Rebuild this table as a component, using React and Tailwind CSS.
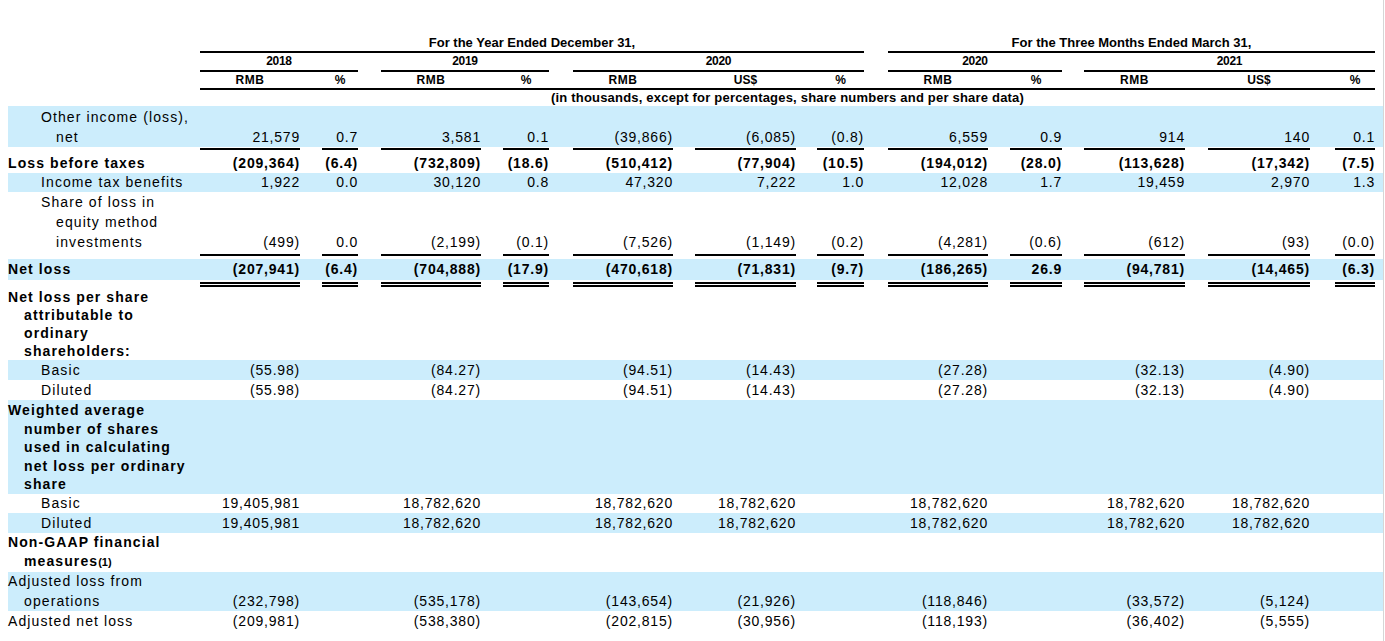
const cols = [
  ["w-[100px]", "w-[100px]"],
  ["w-[58px]", "w-[36px]"],
  ["w-[123px]", "w-[100px]"],
  ["w-[68px]", "w-[46px]"],
  ["w-[124px]", "w-[100px]"],
  ["w-[123px]", "w-[101px]"],
  ["w-[68px]", "w-[47px]"],
  ["w-[124px]", "w-[100px]"],
  ["w-[74px]", "w-[52px]"],
  ["w-[123px]", "w-[101px]"],
  ["w-[125px]", "w-[102px]"],
  ["w-[65px]", "w-[40px]"],
];

const heads = ["RMB", "%", "RMB", "%", "RMB", "US$", "%", "RMB", "%", "RMB", "US$", "%"];

const rows = {
  other: ["21,579", "0.7", "3,581", "0.1", "(39,866)", "(6,085)", "(0.8)", "6,559", "0.9", "914", "140", "0.1"],
  lbt: ["(209,364)", "(6.4)", "(732,809)", "(18.6)", "(510,412)", "(77,904)", "(10.5)", "(194,012)", "(28.0)", "(113,628)", "(17,342)", "(7.5)"],
  tax: ["1,922", "0.0", "30,120", "0.8", "47,320", "7,222", "1.0", "12,028", "1.7", "19,459", "2,970", "1.3"],
  equity: ["(499)", "0.0", "(2,199)", "(0.1)", "(7,526)", "(1,149)", "(0.2)", "(4,281)", "(0.6)", "(612)", "(93)", "(0.0)"],
  net: ["(207,941)", "(6.4)", "(704,888)", "(17.9)", "(470,618)", "(71,831)", "(9.7)", "(186,265)", "26.9", "(94,781)", "(14,465)", "(6.3)"],
  eps: ["(55.98)", "", "(84.27)", "", "(94.51)", "(14.43)", "", "(27.28)", "", "(32.13)", "(4.90)", ""],
  shares1: ["19,405,981", "", "18,782,620", "", "18,782,620", "18,782,620", "", "18,782,620", "", "18,782,620", "18,782,620", ""],
  adjOps: ["(232,798)", "", "(535,178)", "", "(143,654)", "(21,926)", "", "(118,846)", "", "(33,572)", "(5,124)", ""],
  adjNet: ["(209,981)", "", "(538,380)", "", "(202,815)", "(30,956)", "", "(118,193)", "", "(36,402)", "(5,555)", ""],
};

const Values = ({ values, bold }) =>
  cols.map(([outer, inner], i) => (
    <div key={i} className={`${outer} shrink-0 flex justify-end`}>
      <div className={`${inner} text-right whitespace-nowrap ${bold ? "font-bold" : ""}`}>{values[i]}</div>
    </div>
  ));

// label lines: [text, indent class, bold]
const Row = ({ lines, values, bold, className }) => (
  <div className={`flex items-end ${className}`}>
    <div className="w-[192px] shrink-0 flex flex-col tracking-[1.1px]">
      {lines.map(([t, indent, b], i) => (
        <div key={i} className={`${indent} whitespace-nowrap ${b ? "font-bold" : ""}`}>{t}</div>
      ))}
    </div>
    <Values values={values} bold={bold} />
  </div>
);

const Rule = ({ double, className }) => (
  <div className={`flex ${className}`}>
    <div className="w-[192px] shrink-0" />
    {cols.map(([outer, inner], i) => (
      <div key={i} className={`${outer} shrink-0 flex justify-end`}>
        <div className={`${inner} flex flex-col gap-[1px]`}>
          <div className="h-[2px] bg-black" />
          {double && <div className="h-[2px] bg-black" />}
        </div>
      </div>
    ))}
  </div>
);

const empty = Array(12).fill("");

export default function App() {
  return (
    <div className="w-[1385px] h-[641px] bg-white text-black font-['Liberation_Sans',Arial,sans-serif] overflow-hidden">
      <div className="w-[1384px] h-[641px] pl-2 border-r border-[#d6d6d6]">
        {/* header */}
        <div className="text-[13px] font-bold leading-[16px]">
          <div className="flex pt-[35px]">
            <div className="w-[192px] shrink-0" />
            <div className="w-[664px] text-center border-b-2 border-black">For the Year Ended December 31,</div>
            <div className="w-[24px] shrink-0" />
            <div className="w-[487px] text-center border-b-2 border-black">For the Three Months Ended March 31,</div>
          </div>
          <div className="flex text-[12px] tracking-[-0.3px] leading-[17px]">
            <div className="w-[192px] shrink-0" />
            <div className="w-[158px] shrink-0 text-center border-b-2 border-black">2018</div>
            <div className="w-[23px] shrink-0" />
            <div className="w-[168px] shrink-0 text-center border-b-2 border-black">2019</div>
            <div className="w-[24px] shrink-0" />
            <div className="w-[291px] shrink-0 text-center border-b-2 border-black">2020</div>
            <div className="w-[24px] shrink-0" />
            <div className="w-[174px] shrink-0 text-center border-b-2 border-black">2020</div>
            <div className="w-[22px] shrink-0" />
            <div className="w-[291px] shrink-0 text-center border-b-2 border-black">2021</div>
          </div>
          <div className="flex text-[12px] leading-[16px]">
            <div className="w-[192px] shrink-0" />
            <div className="w-[1175px] flex border-b-2 border-black">
              {cols.map(([outer, inner], i) => (
                <div key={i} className={`${outer} shrink-0 flex justify-end`}>
                  <div className={`${inner} text-center ${heads[i] === "RMB" ? "tracking-[0.6px]" : ""}`}>{heads[i]}</div>
                </div>
              ))}
            </div>
          </div>
          <div className="flex text-[13px] leading-[16px]">
            <div className="w-[192px] shrink-0" />
            <div className="w-[1175px] text-center tracking-[0.2px]">
              (in thousands, except for percentages, share numbers and per share data)
            </div>
          </div>
        </div>

        {/* body */}
        <div className="text-[14px] tracking-[0.8px]">
          <Row
            className="h-[41px] leading-[20px] bg-[#ccedfc]"
            lines={[["Other income (loss),", "pl-[33px]"], ["net", "pl-[48px]"]]}
            values={rows.other}
          />
          <Rule className="pt-[1px] pb-[3px]" />
          <Row className="h-[20px] leading-[20px]" lines={[["Loss before taxes", "", true]]} values={rows.lbt} bold />
          <Row className="h-[19px] leading-[19px] bg-[#ccedfc]" lines={[["Income tax benefits", "pl-[33px]"]]} values={rows.tax} />
          <Row
            className="h-[60px] leading-[20px]"
            lines={[["Share of loss in", "pl-[33px]"], ["equity method", "pl-[48px]"], ["investments", "pl-[48px]"]]}
            values={rows.equity}
          />
          <Rule className="pt-[2px] pb-[3px]" />
          <Row className="h-[21px] leading-[21px] bg-[#ccedfc]" lines={[["Net loss", "", true]]} values={rows.net} bold />
          <Rule double className="pt-[2px] pb-[1px]" />
          <Row
            className="h-[72px] leading-[18px]"
            lines={[
              ["Net loss per share", "", true],
              ["attributable to", "pl-[16px]", true],
              ["ordinary", "pl-[16px]", true],
              ["shareholders:", "pl-[16px]", true],
            ]}
            values={empty}
          />
          <Row className="h-[20px] leading-[20px] bg-[#ccedfc]" lines={[["Basic", "pl-[33px]"]]} values={rows.eps} />
          <Row className="h-[20px] leading-[20px]" lines={[["Diluted", "pl-[33px]"]]} values={rows.eps} />
          <Row
            className="h-[94px] leading-[18.6px] bg-[#ccedfc]"
            lines={[
              ["Weighted average", "", true],
              ["number of shares", "pl-[16px]", true],
              ["used in calculating", "pl-[16px]", true],
              ["net loss per ordinary", "pl-[16px]", true],
              ["share", "pl-[16px]", true],
            ]}
            values={empty}
          />
          <Row className="h-[19px] leading-[19px]" lines={[["Basic", "pl-[33px]"]]} values={rows.shares1} />
          <Row className="h-[20px] leading-[20px] bg-[#ccedfc]" lines={[["Diluted", "pl-[33px]"]]} values={rows.shares1} />
          <div className="flex items-end h-[39px] leading-[19px]">
            <div className="w-[192px] shrink-0 flex flex-col font-bold tracking-[1.1px]">
              <div className="whitespace-nowrap">Non-GAAP financial</div>
              <div className="pl-[16px] whitespace-nowrap">
                measures<span className="text-[11px] tracking-normal">(1)</span>
              </div>
            </div>
          </div>
          <Row
            className="h-[39px] leading-[19.5px] bg-[#ccedfc]"
            lines={[["Adjusted loss from", ""], ["operations", "pl-[16px]"]]}
            values={rows.adjOps}
          />
          <Row className="h-[20px] leading-[20px]" lines={[["Adjusted net loss", ""]]} values={rows.adjNet} />
        </div>
      </div>
    </div>
  );
}
